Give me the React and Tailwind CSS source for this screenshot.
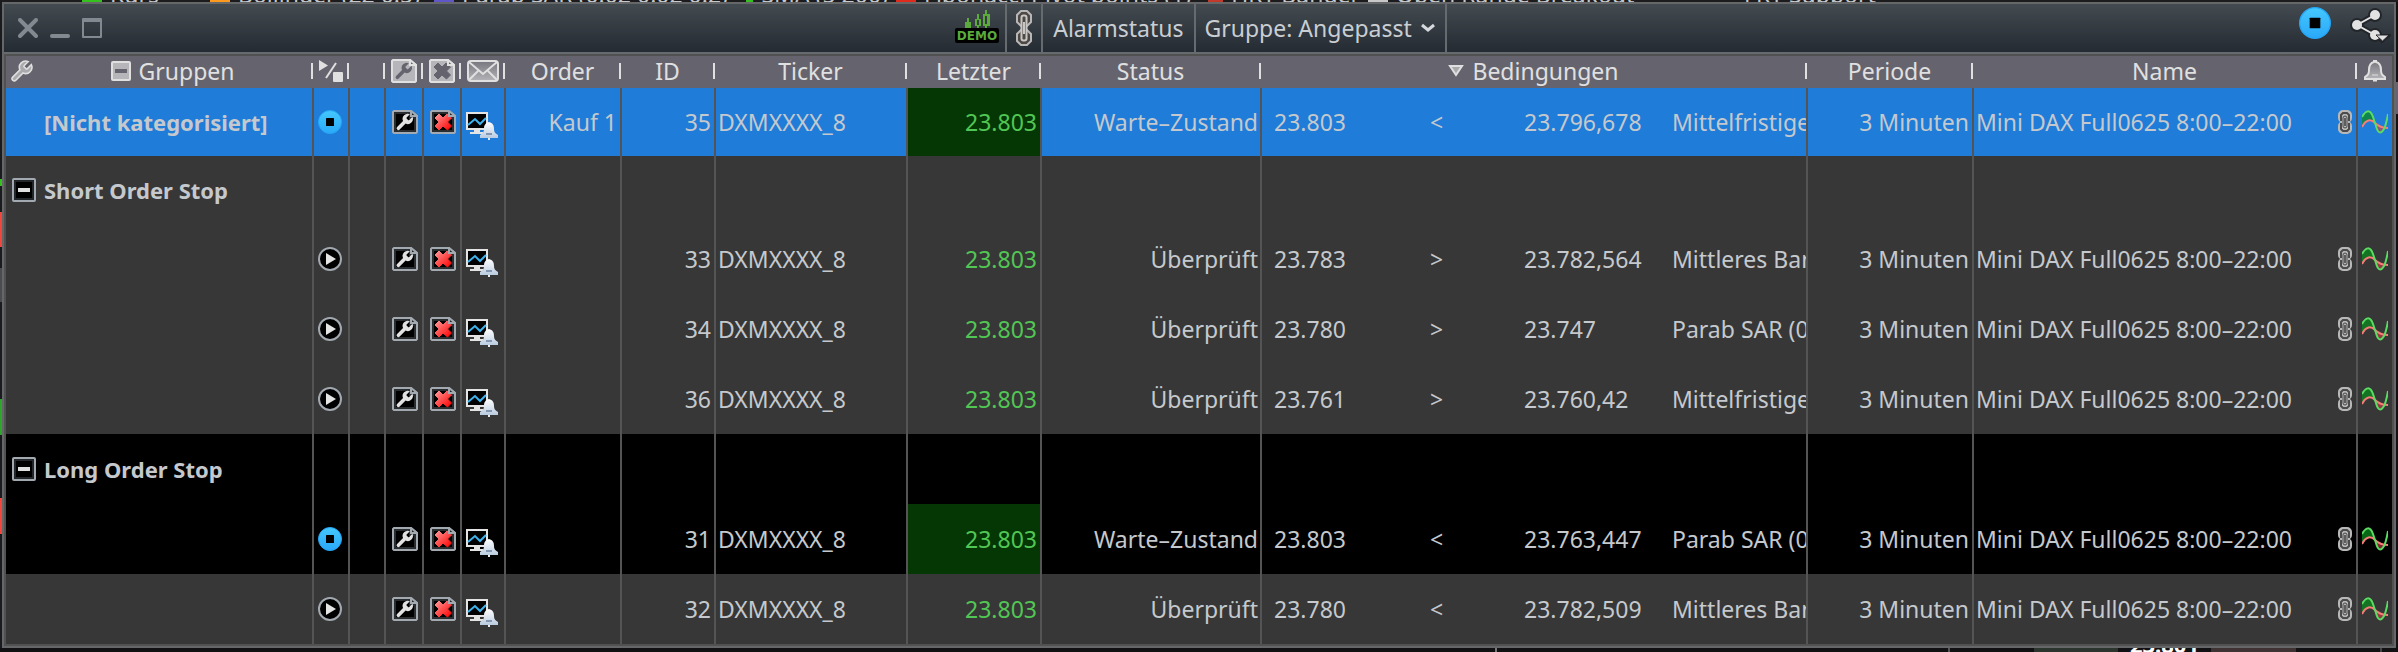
const ORDERS = [
  { group: '[Nicht kategorisiert]', order: 'Kauf 1', id: 35, waiting: true, left: '23.803', op: '<', right: '23.796,678', label: 'Mittelfristige', tone: 'blue' },
  { heading: 'Short Order Stop', tone: 'gray', first: true },
  { id: 33, left: '23.783', op: '>', right: '23.782,564', label: 'Mittleres Ban', tone: 'gray' },
  { id: 34, left: '23.780', op: '>', right: '23.747', label: 'Parab SAR (0', tone: 'gray' },
  { id: 36, left: '23.761', op: '>', right: '23.760,42', label: 'Mittelfristige', tone: 'gray' },
  { heading: 'Long Order Stop', tone: 'black' },
  { id: 31, waiting: true, left: '23.803', op: '<', right: '23.763,447', label: 'Parab SAR (0', tone: 'black' },
  { id: 32, left: '23.780', op: '<', right: '23.782,509', label: 'Mittleres Ban', tone: 'gray' },
];

const TONES = {
  blue: 'bg-[#1f7cd8]',
  gray: 'bg-[#373737]',
  black: 'bg-black',
};

const WRENCH =
  'M14.7 6.3a1 1 0 0 0 0 1.4l1.6 1.6a1 1 0 0 0 1.4 0l3.77-3.77a6 6 0 0 1-7.94 7.94l-6.91 6.91a2.12 2.12 0 0 1-3-3l6.91-6.91a6 6 0 0 1 7.94-7.94l-3.76 3.76z';
const CROSS = 'M5 8l4-4 4 4 4-4 4.500 4-4 4 4 4-4 4-4.500-4-4 4-4-4 4-4z';

function Gradients() {
  return (
    <svg className="absolute h-0 w-0" aria-hidden="true">
      <defs>
        <linearGradient id="redCross" x1="0" y1="0" x2="1" y2="1">
          <stop offset="0.1" stopColor="#ff8a8a" />
          <stop offset="0.9" stopColor="#ff0d0d" />
        </linearGradient>
        <linearGradient id="blueDisc" x1="0" y1="0" x2="0" y2="1">
          <stop offset="0" stopColor="#45c8ff" />
          <stop offset="1" stopColor="#2aa8f8" />
        </linearGradient>
        <linearGradient id="silver" x1="0" y1="0" x2="0" y2="1">
          <stop offset="0" stopColor="#ffffff" />
          <stop offset="1" stopColor="#b9cbe0" />
        </linearGradient>
        <linearGradient id="pewter" x1="0" y1="0" x2="0" y2="1">
          <stop offset="0" stopColor="#77767e" />
          <stop offset="1" stopColor="#b4b4b8" />
        </linearGradient>
      </defs>
    </svg>
  );
}

function Page({ muted, children }) {
  const edge = muted ? '#e0e0e0' : '#a3a9b0';
  return (
    <svg width="26" height="24" viewBox="0 0 26 24" className="block">
      <path d="M2 1h17l6 5v16l-1 1H2l-1-1V2z" fill={muted ? '#b6b6ba' : '#000'} stroke={edge} strokeWidth="2" />
      {!muted && <path d="M3 3h15v5h5v13H3z" fill="none" stroke="#292d30" strokeWidth="2" />}
      {children}
      <path d="M19 1v5h6z" fill={muted ? '#65646e' : '#222'} stroke={edge} strokeWidth="2" />
    </svg>
  );
}

function EditIcon({ muted }) {
  return (
    <Page muted={muted}>
      <path d={WRENCH} transform="translate(2 2) scale(.86)" fill={muted ? '#65646e' : '#e2e2e2'} />
    </Page>
  );
}

function DeleteIcon({ muted }) {
  return (
    <Page muted={muted}>
      <path
        d={CROSS}
        fill={muted ? '#65646e' : 'url(#redCross)'}
        stroke={muted ? '#65646e' : 'url(#redCross)'}
        strokeLinejoin="round"
      />
    </Page>
  );
}

function StopIcon({ size = 24 }) {
  return (
    <svg width={size} height={size} viewBox="0 0 24 24" className="block">
      <circle cx="12" cy="12" r="11.500" fill="url(#blueDisc)" stroke="#25a6f5" />
      <rect x="8" y="8" width="8" height="8" rx=".5" fill="#000" />
    </svg>
  );
}

function PlayIcon() {
  return (
    <svg width="24" height="24" viewBox="0 0 24 24" className="block">
      <circle cx="12" cy="12" r="11" fill="#000" stroke="#a3a9b0" strokeWidth="2" />
      <path d="M8 6v12l10-6z" fill="#e4e4e4" />
    </svg>
  );
}

function MonitorIcon() {
  return (
    <svg width="32" height="28" viewBox="0 0 32 28" className="block">
      <rect x="1" y="1" width="20" height="16" fill="#000" stroke="#e4e4e4" strokeWidth="2" />
      <path d="M2 13l7-6 5 5 6-6" fill="none" stroke="#3db4f0" strokeWidth="2" />
      <path d="M8 18h6v2h3v2H4v-2h4z" fill="#e4e4e4" />
      <path d="M23 10c3.500 1 5 3 5 7 0 3 1 4 4 6v3H14v-3c3-2 4-3 4-6 0-4 1.500-6 5-7z" fill="url(#silver)" />
      <path d="M20 22h6" stroke="#8497b0" strokeWidth="2" />
      <path d="M22 26h2v2h-2z" fill="#e4ecf5" />
    </svg>
  );
}

function MinusBox() {
  return (
    <svg width="24" height="24" viewBox="0 0 24 24" className="block">
      <rect x="1" y="1" width="22" height="22" rx="1" fill="#000" stroke="#a3a9b0" strokeWidth="2" />
      <rect x="3" y="3" width="18" height="18" fill="none" stroke="#24272a" strokeWidth="2" />
      <path d="M6 12h12" stroke="#e0e0e0" strokeWidth="4" />
    </svg>
  );
}

function LinkSmall() {
  return (
    <svg width="14" height="24" viewBox="0 0 14 24" className="block shrink-0">
      <g fill="none" stroke="#b8b8b8" strokeWidth="6" strokeLinejoin="round">
        <rect x="3" y="3" width="8" height="7" rx="2" />
        <rect x="3" y="14" width="8" height="7" rx="2" />
      </g>
      <g fill="none" stroke="#4b4b4b" strokeWidth="2">
        <path d="M4 10H3V5l2-2h4l2 2v5h-1M4 14H3v5l2 2h4l2-2v-5h-1" />
      </g>
      <rect x="5" y="6" width="4" height="12" rx="2" fill="#b8b8b8" stroke="#4b4b4b" strokeWidth="1" />
      <path d="M7 8v8" stroke="#5d5d5d" strokeWidth="2" />
    </svg>
  );
}

function WaveIcon() {
  return (
    <svg width="26" height="24" viewBox="0 0 26 24" className="block">
      <path d="M0 7C4 0 8-1 11 7l2 5C9 9 5 9 0 17z" fill="#0b8a1f" fillOpacity=".75" />
      <path d="M12 11c3 12 6 14 10 7-4-1-7-4-10-7z" fill="#d33a4a" fillOpacity=".6" />
      <path d="M0 17c4-8 9-8 13-4s8 5 13 5" fill="none" stroke="#f87c78" strokeWidth="2" />
      <path d="M0 7c4-7 8-8 11 0l3 9c2 8 5 8 8 3 2-4 3-9 4-15" fill="none" stroke="#5bdc62" strokeWidth="2" />
    </svg>
  );
}

function Bell() {
  return (
    <svg width="22" height="22" viewBox="0 0 22 22" className="block">
      <path
        d="M10 2V1h2v1c4 1 5 4 5 8 0 4 1 5 4 7v2H1v-2c3-2 4-3 4-7 0-4 1-7 5-8z"
        fill="url(#pewter)"
        stroke="#e0e0e0"
        strokeWidth="2"
      />
      <path d="M8 15h6" stroke="#e0e0e0" />
      <path d="M9 19h4v2.500H9z" fill="#e0e0e0" />
    </svg>
  );
}

function HeadContent({ children }) {
  return <div className="flex flex-1 items-center justify-center gap-2 pb-[2px] leading-7">{children}</div>;
}

function HeadTick() {
  return <span className="mr-px mb-[2px] h-4 w-[2px] bg-[#e0e0e0]" />;
}

function Head({ children, last }) {
  return (
    <th className="h-8 p-0 font-normal">
      <div className="flex h-8 items-center">
        <HeadContent>{children}</HeadContent>
        {!last && <HeadTick />}
      </div>
    </th>
  );
}

function Cell({ className = '', children }) {
  return (
    <td className={`overflow-hidden border-r-2 border-[#545454] px-0 pt-0 pb-px whitespace-nowrap last:border-r-0 ${className}`}>
      {children}
    </td>
  );
}

function IconButton({ label, children }) {
  return (
    <button type="button" aria-label={label} className="mx-auto block">
      {children}
    </button>
  );
}

function Row({ row }) {
  const height = row.tone === 'blue' || row.first ? 'h-[68px]' : 'h-[70px]';

  if (row.heading) {
    return (
      <tr className={`${height} ${TONES[row.tone]}`}>
        <Cell>
          <button type="button" className="flex items-center gap-2 pl-[6px] text-[22px] font-bold">
            <MinusBox />
            {row.heading}
          </button>
        </Cell>
        {Array.from({ length: 14 }, (_, i) => (
          <Cell key={i} />
        ))}
      </tr>
    );
  }

  return (
    <tr className={`${height} ${TONES[row.tone]}`}>
      <Cell className="pl-[38px] text-[22px] font-bold">{row.group}</Cell>
      <Cell className="pr-[2px]">
        <IconButton label={row.waiting ? 'Stopp' : 'Start'}>{row.waiting ? <StopIcon /> : <PlayIcon />}</IconButton>
      </Cell>
      <Cell />
      <Cell className="pl-[2px]">
        <IconButton label="Bearbeiten"><EditIcon /></IconButton>
      </Cell>
      <Cell className="pl-[2px]">
        <IconButton label="Löschen"><DeleteIcon /></IconButton>
      </Cell>
      <Cell className="pt-2 pr-[2px]">
        <IconButton label="Benachrichtigung"><MonitorIcon /></IconButton>
      </Cell>
      <Cell className="pr-[3px] text-right">{row.order}</Cell>
      <Cell className="pr-[3px] text-right">{row.id}</Cell>
      <Cell className="pl-[2px]">DXMXXXX_8</Cell>
      <Cell className={`pr-[3px] text-right text-[#52c654] ${row.waiting ? 'bg-[#043704]' : ''}`}>23.803</Cell>
      <Cell className="pr-[2px] text-right">{row.waiting ? 'Warte–Zustand' : 'Überprüft'}</Cell>
      <Cell>
        <div className="grid grid-cols-[156px_94px_148px_1fr] pl-3">
          <span>{row.left}</span>
          <span>{row.op}</span>
          <span>{row.right}</span>
          <span>{row.label}</span>
        </div>
      </Cell>
      <Cell className="pr-[3px] text-right">3 Minuten</Cell>
      <Cell>
        <div className="flex items-center justify-between pr-1 pl-[2px]">
          Mini DAX Full0625 8:00–22:00
          <LinkSmall />
        </div>
      </Cell>
      <Cell>
        <IconButton label="Chart"><WaveIcon /></IconButton>
      </Cell>
    </tr>
  );
}

function TitleBar() {
  return (
    <header className="grid h-[50px] grid-cols-[1fr_auto_1fr] border-b-2 border-[#666b70] bg-linear-to-b from-[#434a50] to-[#252b32] text-[#c9ced3]">
      <div className="flex items-center gap-3 pl-[14px]">
        <button type="button" aria-label="Schließen">
          <svg width="20" height="20" viewBox="0 0 20 20" className="block">
            <path d="M2 2l16 16M18 2L2 18" stroke="#838990" strokeWidth="4" strokeLinecap="round" />
          </svg>
        </button>
        <button type="button" aria-label="Minimieren">
          <svg width="20" height="20" viewBox="0 0 20 20" className="block">
            <path d="M2 18h16" stroke="#838990" strokeWidth="4" strokeLinecap="round" />
          </svg>
        </button>
        <button type="button" aria-label="Maximieren">
          <svg width="20" height="20" viewBox="0 0 20 20" className="block">
            <path d="M1 1h18v18H1zM1 3h18" fill="none" stroke="#838990" strokeWidth="2" strokeLinejoin="round" />
          </svg>
        </button>
      </div>

      <div className="flex items-stretch pl-1">
        <svg width="44" height="34" viewBox="0 0 44 34" className="mt-[6px] mr-[6px]">
          <g fill="#5aaa3c">
            <path d="M10 12h2V8h2v4h2v6h-6zM30 0h2v4h3v12h-3v3h-2v-3h-2V4h2zM20 9h2V4h2v5h2v7h-2v3h-2v-3h-2z" />
          </g>
          <path d="M22 10h2v5h-2zM30 6h2v8h-2z" fill="#363c42" />
          <rect y="18" width="44" height="15" rx="2" fill="#000" />
          <text x="22" y="30" textAnchor="middle" className="fill-[#5aaa3c] font-['DejaVu_Sans'] text-[12px] font-bold">
            DEMO
          </text>
        </svg>
        <button type="button" aria-label="Verknüpfung" className="border-l-2 border-[#666b70] px-2">
          <svg width="18" height="38" viewBox="0 0 18 38" className="block">
            <g fill="#4c4846" stroke="#b9b7b5" strokeWidth="2">
              <path d="M6 2h6l4 4v7l-4 4H6l-4-4V6z" />
              <path d="M6 21h6l4 4v7l-4 4H6l-4-4v-7z" />
            </g>
            <rect x="6.500" y="6.500" width="5" height="25" rx="2" fill="#4c4846" stroke="#c9c7c5" strokeWidth="2" />
            <path d="M9 13v12" stroke="#c9c7c5" strokeWidth="2" />
          </svg>
        </button>
        <button type="button" className="border-l-2 border-[#666b70] px-[10px]">Alarmstatus</button>
        <button type="button" className="flex items-center gap-2 border-x-2 border-[#666b70] px-[9px]">
          Gruppe: Angepasst
          <svg width="16" height="10" viewBox="0 0 16 10">
            <path d="M2 2l6 5 6-5" fill="none" stroke="#d5d8dc" strokeWidth="3" />
          </svg>
        </button>
      </div>

      <div className="flex items-start justify-end gap-[18px] pr-[3px]">
        <button type="button" aria-label="Alle stoppen" className="mt-[3px]">
          <StopIcon size={32} />
        </button>
        <button type="button" aria-label="Teilen" className="mt-1">
          <svg width="42" height="36" viewBox="0 0 42 36" className="block">
            <g stroke="#22262a" strokeWidth="4" fill="#22262a">
              <path d="M26 7L8 17l18 10" fill="none" strokeWidth="6" />
              <circle cx="26" cy="7" r="5" />
              <circle cx="8" cy="17" r="5" />
              <circle cx="26" cy="27" r="5" />
              <path d="M27 28h12l-6 5z" />
            </g>
            <path d="M26 7L8 17l18 10" fill="none" stroke="#e2e2e2" strokeWidth="2" />
            <circle cx="26" cy="7" r="5" fill="#e2e2e2" />
            <circle cx="8" cy="17" r="5" fill="#e2e2e2" />
            <circle cx="26" cy="27" r="5" fill="#e2e2e2" />
            <path d="M27 27h13l-6.500 6z" fill="#e2e2e2" stroke="#22262a" strokeWidth="1" />
          </svg>
        </button>
      </div>
    </header>
  );
}

function OrderTable() {
  return (
    <table className="w-full table-fixed border-separate border-spacing-0 text-[#c5c9cd]">
      <colgroup>
        <col className="w-[308px]" />
        <col className="w-9" />
        <col className="w-9" />
        <col className="w-[38px]" />
        <col className="w-[38px]" />
        <col className="w-11" />
        <col className="w-[116px]" />
        <col className="w-[94px]" />
        <col className="w-48" />
        <col className="w-[134px]" />
        <col className="w-[220px]" />
        <col />
        <col className="w-[166px]" />
        <col className="w-96" />
        <col className="w-[34px]" />
      </colgroup>
      <thead className="bg-[#65646e] text-[#e0e0e0]">
        <tr>
          <th className="h-8 p-0 font-normal">
            <div className="flex h-8 items-center pl-1">
              <button type="button" aria-label="Einstellungen">
                <svg width="24" height="24" viewBox="1 1 23 23" className="block">
                  <path d={WRENCH} fill="#aaaaae" stroke="#e0e0e0" strokeWidth="1.500" />
                </svg>
              </button>
              <HeadContent>
                <svg width="20" height="20" viewBox="0 0 20 20">
                  <rect x="1" y="1" width="18" height="18" rx="1" fill="#b6b6ba" stroke="#e0e0e0" strokeWidth="2" />
                  <path d="M4 10h12" stroke="#65646e" strokeWidth="4" />
                </svg>
                Gruppen
              </HeadContent>
              <HeadTick />
            </div>
          </th>
          <Head>
            <svg width="24" height="22" viewBox="0 0 24 22">
              <path d="M0 0v11l9-5.500z" fill="#e0e0e0" />
              <path d="M17 3L7 18" stroke="#e0e0e0" strokeWidth="2" />
              <rect x="14" y="12" width="10" height="10" rx="1" fill="#e0e0e0" />
            </svg>
          </Head>
          <Head />
          <Head><EditIcon muted /></Head>
          <Head><DeleteIcon muted /></Head>
          <Head>
            <svg width="32" height="22" viewBox="0 0 32 22">
              <rect x="1" y="1" width="30" height="20" rx="3" fill="url(#pewter)" stroke="#e0e0e0" strokeWidth="2" />
              <path d="M2 2l14 12L30 2M2 20l9-9M30 20l-9-9" fill="none" stroke="#e0e0e0" strokeWidth="2" />
            </svg>
          </Head>
          <Head>Order</Head>
          <Head>ID</Head>
          <Head>Ticker</Head>
          <Head>Letzter</Head>
          <Head>Status</Head>
          <Head>
            <svg width="16" height="12" viewBox="0 0 16 12">
              <path d="M2 1h12l-6 9z" fill="#aaaaae" stroke="#e0e0e0" strokeWidth="2" />
            </svg>
            Bedingungen
          </Head>
          <Head>Periode</Head>
          <Head>Name</Head>
          <Head last><Bell /></Head>
        </tr>
      </thead>
      <tbody>
        {ORDERS.map((row) => (
          <Row key={row.id ?? row.heading} row={row} />
        ))}
      </tbody>
    </table>
  );
}

// bits of the chart window that peek out behind the order window
const LEGEND = [
  { color: 'bg-[#35c21f]', text: 'Kurs', width: 'w-[120px]' },
  { color: 'bg-[#ff9a1f]', text: 'Bollinger (22 0.5)', width: 'w-[216px]' },
  { color: 'bg-[#5f57c8]', text: 'Parab SAR (0.02 0.02 0.2)', width: 'w-[304px]' },
  { color: 'bg-[#35c21f]', text: 'SMA (5 200)', width: 'w-[142px]' },
  { color: 'bg-[#e02a1c]', text: 'Fibonacci Pivot points (1)', width: 'w-[304px]' },
  { color: 'bg-[#c33a2c]', text: 'HKT Bänder', width: 'w-[152px]' },
  { color: 'bg-[#c8c8c8]', text: 'Open Range Breakout', width: 'w-[340px]' },
  { color: 'bg-[#1c1c1e]', text: 'FKT Support', width: 'w-[240px]' },
];

function BackdropTop() {
  return (
    <div aria-hidden="true" className="flex h-[2px] items-end gap-2 overflow-hidden bg-[#1c1c1e] pl-[82px] text-[#c5c9cd]">
      {LEGEND.map((item) => (
        <span key={item.text} className={`flex shrink-0 items-end gap-2 whitespace-nowrap ${item.width}`}>
          <i className={`h-[2px] w-5 ${item.color}`} />
          <span className="mb-[-6px] leading-7">{item.text}</span>
        </span>
      ))}
    </div>
  );
}

function BackdropLeft() {
  return (
    <div aria-hidden="true" className="flex w-[2px] flex-col bg-[#1a1b1e]">
      <i className="mt-[177px] h-[7px] bg-[#35c21f]" />
      <i className="mt-[26px] h-[35px] bg-[#f0483f]" />
      <i className="mt-[21px] h-[34px] bg-[#4a4c50]" />
      <i className="mt-[97px] h-9 bg-[#2fa52c]" />
      <i className="mt-[63px] h-9 bg-[#f0483f]" />
    </div>
  );
}

function BackdropBottom() {
  return (
    <div aria-hidden="true" className="flex h-1 justify-end overflow-hidden bg-[#111113] pr-4">
      <i className="w-[2px] bg-[#777]" />
      <i className="mr-[84px] ml-[451px] w-[2px] bg-[#555]" />
      <i className="w-[84px] bg-[#2b352e]" />
      <span className="mt-[-14px] w-[93px] text-center text-[22px] leading-5 font-bold text-white">23.801</span>
      <i className="w-[85px] bg-[#3e3232]" />
      <i className="ml-[84px] w-[2px] bg-[#444]" />
    </div>
  );
}

export default function App() {
  return (
    <main className="bg-[#111113] font-['Noto_Sans','Open_Sans',sans-serif] text-[23px] leading-7">
      <Gradients />
      <BackdropTop />
      <div className="flex">
        <BackdropLeft />
        <section className="min-w-0 flex-1 border-2 border-[#666769]">
          <TitleBar />
          <div className="border-2 border-[#515152]">
            <OrderTable />
          </div>
        </section>
        <div aria-hidden="true" className="flex w-[2px] flex-col">
          <i className="mt-20 h-8 bg-[#65646e]" />
        </div>
      </div>
      <BackdropBottom />
    </main>
  );
}
